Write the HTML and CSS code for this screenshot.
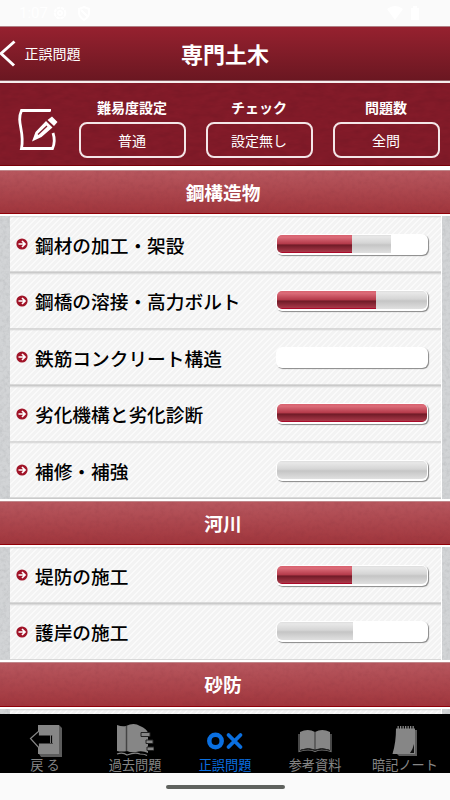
FILE: index.html
```html
<!DOCTYPE html>
<html lang="ja">
<head>
  <meta charset="UTF-8">
  <meta name="viewport" content="width=device-width, initial-scale=1.0">
  <title>専門土木</title>
  <link rel="stylesheet" href="styles.css">
</head>
<body>
  <div class="status">
    <span class="time">1:07</span>
    <svg width="14" height="14" viewBox="0 0 14 14" fill="none" stroke="#fff" stroke-width="2"><circle cx="7" cy="7" r="5.3" stroke-dasharray="3.5 .7"/><circle cx="7" cy="7" r="2"/></svg>
    <svg width="14" height="15" viewBox="0 0 14 15" fill="none" stroke="#fff" stroke-width="2"><path d="M7 1l5 2v4c0 3-2 5-5 7-3-2-5-4-5-7V3zM4 4l6 6"/></svg>
    <svg class="signal" width="32" height="15" viewBox="0 0 32 15" fill="#fff"><path d="M0 3Q8-3 16 3L8 14zM24 2h2V0h4v2h2v12h-8z"/></svg>
  </div>

  <header class="header">
    <a class="back">
      <svg width="17" height="28" viewBox="0 0 17 28" fill="none" stroke="#fff" stroke-width="3"><path d="M14.500 2.500L1 14.500l13 12"/></svg>
      <span>正誤問題</span>
    </a>
    <h1>専門土木</h1>
  </header>

  <div class="settings">
    <svg class="edit" width="42" height="42" viewBox="0 0 42 42">
      <path d="M34 1.500H4.500C-1 14 8 22 4.500 39.500H35.500C38 34 38 30 36 24" fill="none" stroke="#fff" stroke-width="2.800"/>
      <path d="M36 0l5 8-18 20-12 6 5-13z" fill="#7f1928"/>
      <path d="M35 7.500l5.500 5.500-3.500 4-6.500-6zM29 12l6.500 6.500L24.500 28l-9.500 4.500L18.500 23z" fill="#fff"/>
      <path d="M30 17L21 25.500" stroke="#7f1928" stroke-width="1.300"/>
    </svg>
    <div class="setting">
      <b>難易度設定</b>
      <button>普通</button>
    </div>
    <div class="setting">
      <b>チェック</b>
      <button>設定無し</button>
    </div>
    <div class="setting">
      <b>問題数</b>
      <button>全問</button>
    </div>
  </div>

  <main class="content" id="content">
    <!-- 章と項目はスクリプトで追加 -->
  </main>

  <nav class="tabs">
    <a class="tab">
      <svg width="34" height="34" viewBox="0 0 34 34"><path d="M11 1h20l3 3v29H13l-2-3z" fill="#5c5c5c"/><path d="M10 1h21v29H10z" fill="#868686"/><path d="M2.500 14.500l9-8V11h14v9h-14v4.500z" fill="#000" stroke="#868686" stroke-width="1.200"/><path d="M22.500 11v8M24.500 11v8" stroke="#777"/></svg>
      <span>戻 る</span>
    </a>
    <a class="tab">
      <svg width="38" height="34" viewBox="0 0 38 34"><path d="M1 1q5 2 9 1 8-4 14 0 7 3 8 7v20q-6-3-12-1-5 1-9-1-5 1-10 0z" fill="#868686"/><path d="M10.500 2v25" stroke="#444" stroke-width="1.500"/><path d="M1 30q6-2 10 1 8-3 13-1 5 0 7 1.500" fill="none" stroke="#868686" stroke-width="1.200"/><path d="M25 8.500h9v4h-9zM30 16h7v3.500h-7zM31 23h7v3.500h-7z" fill="#868686" stroke="#222"/></svg>
      <span>過去問題</span>
    </a>
    <a class="tab active">
      <svg width="38" height="34" viewBox="0 0 38 34" fill="none" stroke="#0a6fe0"><circle cx="9.500" cy="17" r="6.200" stroke-width="4.500"/><path d="M22.500 11l12 12M34.500 11l-12 12" stroke-width="3.800" stroke-linecap="round"/></svg>
      <span>正誤問題</span>
    </a>
    <a class="tab">
      <svg width="34" height="34" viewBox="0 0 34 34"><path d="M2 8q8-4 15 0 7-4 15 0v18q-8-3-15 0-7-3-15 0z" fill="#868686"/><path d="M1 10v17.500q10-3 16 0 6-3 16 0V10" fill="none" stroke="#777" stroke-width="1.200"/><path d="M17 8v18" stroke="#444" stroke-width="1.200"/><path d="M3 26q8-3 14 0 6-3 14 0" fill="none" stroke="#222"/></svg>
      <span>参考資料</span>
    </a>
    <a class="tab">
      <svg width="34" height="34" viewBox="0 0 34 34"><path d="M10 6h19v26H11l-2-2z" fill="#5c5c5c"/><path d="M8 4.500h19V30H4.500C7 22 8 13 8 4.500z" fill="#868686"/><path d="M26 20v9h-4q3-4 4-9z" fill="#111"/><path d="M9.500 3.500h17" stroke="#868686" stroke-width="3" stroke-dasharray="1.300 1.200"/></svg>
      <span>暗記ノート</span>
    </a>
  </nav>
  <div class="home"><i></i></div>

  <script>
    // 割合は%: 赤 = 正解, 灰 = 回答済み
    const chapters = [
      { title: "鋼構造物", items: [
        ["鋼材の加工・架設", 50, 76],
        ["鋼橋の溶接・高力ボルト", 66, 100],
        ["鉄筋コンクリート構造", 0, 0],
        ["劣化機構と劣化診断", 100, 100],
        ["補修・補強", 0, 100]
      ]},
      { title: "河川", items: [
        ["堤防の施工", 50, 100],
        ["護岸の施工", 0, 51]
      ]},
      { title: "砂防", items: [["", 0, 0]] }
    ];

    const content = document.getElementById("content");
    for (const chapter of chapters) {
      let html = `<h2 class="chapter">${chapter.title}</h2><ul class="list">`;
      for (const [name, red, gray] of chapter.items) {
        html += `
          <li class="row">
            <svg width="12" height="12" viewBox="0 0 12 12"><circle cx="6" cy="6" r="5.600" fill="#a01428"/><path d="M2.500 6H9M6 3l3 3-3 3" fill="none" stroke="#fff" stroke-width="1.700"/></svg>
            <span class="name">${name}</span>
            <div class="bar"><div class="track">
              <div class="gray" style="width: ${gray}%"></div>
              <div class="red" style="width: ${red}%"></div>
            </div></div>
          </li>`;
      }
      content.innerHTML += html + "</ul>";
    }
  </script>
</body>
</html>
```
FILE: styles.css
```css
* {
  box-sizing: border-box;
}
body {
  margin: 0;
  height: 800px;
  display: flex;
  flex-direction: column;
  overflow: hidden;
  background: #fafafa;
  font-family: "Noto Sans CJK JP", sans-serif;
}
.status {
  height: 26px;
  flex: none;
  display: flex;
  align-items: center;
  gap: 10px;
  padding: 0 31px 0 19px;
}
.time {
  width: 24px;
  color: #fff;
  font: 15px Roboto, sans-serif;
  white-space: nowrap;
}
.signal {
  margin-left: auto;
}
.header {
  height: 57px;
  flex: none;
  display: grid;
  grid-template-columns: 1fr auto 1fr;
  align-items: center;
  padding-bottom: 2px;
  border-top: 1px solid #b08085;
  border-bottom: 2px solid #f6eeee;
  background: linear-gradient(#96212f, #6a1721);
  box-shadow: inset 0 -1px #8d5a60;
  color: #fff;
}
.back {
  display: flex;
  align-items: center;
  gap: 7.500px;
  font-size: 14px;
}
h1 {
  margin: 0;
  font-size: 22px;
  line-height: 32px;
}
.settings {
  height: 83px;
  flex: none;
  display: flex;
  padding: 15px 10px 0 17px;
  background: url("data:image/svg+xml,%3Csvg xmlns='http://www.w3.org/2000/svg' width='450' height='83'%3E%3Cfilter id='n' color-interpolation-filters='sRGB'%3E%3CfeTurbulence type='fractalNoise' baseFrequency='.08 .2' numOctaves='3'/%3E%3CfeColorMatrix values='0 0 0 0 .3 0 0 0 0 .05 0 0 0 0 .1 1 0 0 0 -.35'/%3E%3C/filter%3E%3Crect width='450' height='83' filter='url(%23n)' opacity='.3'/%3E%3C/svg%3E"), #831b29;
  border-bottom: 1px solid #7a0008;
  color: #fff;
}
.edit {
  margin: 11px 20px 0 0;
  flex: none;
}
.setting {
  width: 107px;
  flex: none;
  margin-right: 20px;
  text-align: center;
}
.setting b {
  display: block;
  margin-right: 1px;
  font-size: 14px;
  line-height: 19px;
}
.setting button {
  display: block;
  width: 107px;
  height: 36px;
  margin-top: 5px;
  padding: 0 1px 0 0;
  border: 2px solid #f4e6e8;
  border-radius: 8px;
  background: none;
  color: #fff;
  font: 14px "Noto Sans CJK JP", sans-serif;
}
.content {
  flex: 1;
  min-height: 0;
  overflow: hidden;
  padding-top: 1.5px;
  background: url("data:image/svg+xml,%3Csvg xmlns='http://www.w3.org/2000/svg' width='450' height='548'%3E%3Cfilter id='n' color-interpolation-filters='sRGB'%3E%3CfeTurbulence type='fractalNoise' baseFrequency='.3' numOctaves='3'/%3E%3CfeColorMatrix values='0 0 0 0 .6 0 0 0 0 .61 0 0 0 0 .62 1 0 0 0 -.4'/%3E%3C/filter%3E%3Crect width='450' height='548' filter='url(%23n)' opacity='.5'/%3E%3C/svg%3E"), #d2d4d6;
  box-shadow: inset 0 4px #fff;
}
.chapter {
  height: 48.500px;
  margin: 0;
  padding-right: 4px;
  border: solid #fff;
  border-width: 2.500px 0 2px;
  background: url("data:image/svg+xml,%3Csvg xmlns='http://www.w3.org/2000/svg' width='450' height='44'%3E%3Cfilter id='n' color-interpolation-filters='sRGB'%3E%3CfeTurbulence type='fractalNoise' baseFrequency='.2' numOctaves='3'/%3E%3CfeColorMatrix values='0 0 0 0 .45 0 0 0 0 .15 0 0 0 0 .2 1 0 0 0 -.4'/%3E%3C/filter%3E%3Crect width='450' height='44' filter='url(%23n)' opacity='.25'/%3E%3C/svg%3E"), linear-gradient(#b8585f, #9f343b);
  box-shadow: inset 0 -1px #900008, inset 0 1px #c0868a;
  color: #fff;
  font-size: 18.700px;
  line-height: 44px;
  text-align: center;
}
.list {
  width: 431.500px;
  margin: 0 0 0 10px;
  padding: 0;
  border-right: 1.500px solid #fff;
  background: repeating-linear-gradient(135deg, #f3f3f3 0 2.800px, #fafafa 2.800px 4.240px);
  list-style: none;
}
.row {
  height: 56.500px;
  display: flex;
  align-items: center;
  padding: 0 13px 0 6px;
  background: linear-gradient(#d2d2d2, transparent 2px, transparent 54.500px, #cacaca 56px);
}
.name {
  margin: 0 0 0 7px;
  color: #000;
  font-size: 18.700px;
  font-weight: 500;
  white-space: nowrap;
}
.bar {
  width: 152px;
  height: 21px;
  margin: 0 0 0 auto;
  padding: 1px 1px 2px;
  border-radius: 6px;
  background: #fff;
  box-shadow: 1px 1px 1px #888;
}
.track {
  height: 18px;
  display: grid;
  overflow: hidden;
  border-radius: 5px;
}
.gray, .red {
  grid-area: 1 / 1;
}
.gray {
  background: linear-gradient(#ddd, #e8e8e8 10%, #d5d5d5 45%, #c5c5c5 55%, #e0e0e0);
}
.red {
  background: linear-gradient(#d8606d, #dc6c79 12%, #b53b4b 48%, #701b27 56%, #a63747 92%, #ab0a2a 94%);
}
.tabs {
  height: 59px;
  flex: none;
  display: grid;
  grid-template-columns: repeat(5, 1fr);
  background: #000;
}
.tab {
  display: flex;
  flex-direction: column;
  align-items: center;
  padding: 10px 0 0;
  color: #868686;
  font-size: 13.200px;
  line-height: 14px;
  white-space: nowrap;
}
.active {
  color: #0a6fe0;
}
.home {
  height: 27px;
  flex: none;
  display: flex;
  justify-content: center;
  padding-top: 12px;
}
.home i {
  width: 119px;
  height: 4px;
  border-radius: 2px;
  background: #5f625e;
}
```
